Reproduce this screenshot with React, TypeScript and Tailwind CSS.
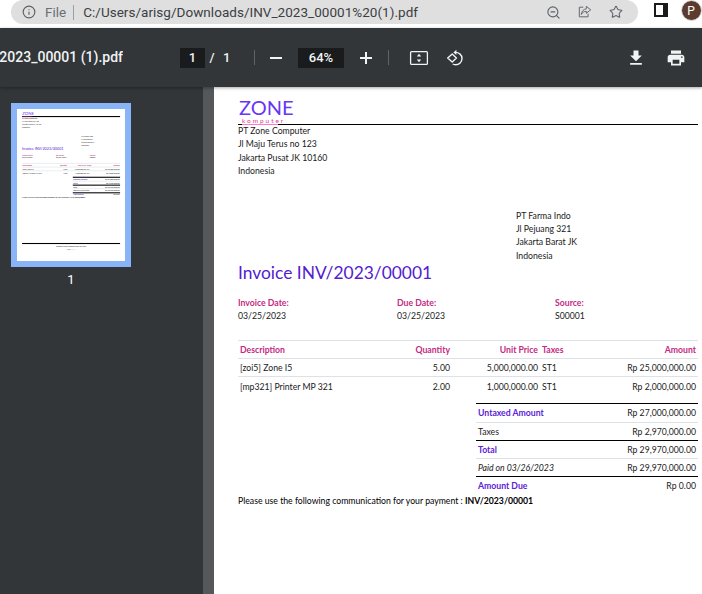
import { Info, Star, ZoomOut } from "lucide-react";

const TABLE_ROWS = [
    { desc: "[zoi5] Zone I5", qty: "5.00", price: "5,000,000.00", tax: "ST1", amount: "Rp 25,000,000.00" },
    { desc: "[mp321] Printer MP 321", qty: "2.00", price: "1,000,000.00", tax: "ST1", amount: "Rp 2,000,000.00" },
];

const TOTALS = [
    { label: "Untaxed Amount", value: "Rp 27,000,000.00", labelCls: "font-bold text-[#5b21d6]", strong: true },
    { label: "Taxes", value: "Rp 2,970,000.00", labelCls: "", strong: false },
    { label: "Total", value: "Rp 29,970,000.00", labelCls: "font-bold text-[#5b21d6]", strong: true },
    { label: "Paid on 03/26/2023", value: "Rp 29,970,000.00", labelCls: "italic", strong: false },
    { label: "Amount Due", value: "Rp 0.00", labelCls: "font-bold text-[#5b21d6]", strong: true },
];

// thumb: hairlines get thicker so they survive the scale-down
function Invoice({ thumb = false }: { thumb?: boolean }) {
    const blackTop = thumb ? "border-t-[5px] border-black" : "border-t border-black";
    const grayTop = thumb ? "border-t-[3px] border-[#dee2e6]" : "border-t border-[#dee2e6]";
    const grayBottom = thumb ? "border-b-[3px] border-[#dee2e6]" : "border-b border-[#dee2e6]";
    return (
        <div className="flex h-[713px] w-[507px] flex-col bg-white pl-6 pr-[23px] pt-[10px] font-['Lato',sans-serif] text-[8.7px] leading-[13.3px] text-[#1a1a1a]">
            {/* Header */}
            <div className={`h-[28px] pl-[1px] ${thumb ? "border-b-[5px] border-black" : "border-b border-black"}`}>
                <div className="text-[20px] leading-[20px] text-[#6a35f5]">ZONE</div>
                <div className="ml-[3px] w-[36px] border-b border-[#ff7ac6] text-[6.5px] leading-[7px] tracking-[1.95px] text-[#e8359c]">
                    komputer
                </div>
            </div>
            <div className="mt-[-1px]">
                <div>PT Zone Computer</div>
                <div>Jl Maju Terus no 123</div>
                <div>Jakarta Pusat JK 10160</div>
                <div>Indonesia</div>
            </div>

            {/* Customer */}
            <div className="ml-[278px] mt-[31.5px]">
                <div>PT Farma Indo</div>
                <div>Jl Pejuang 321</div>
                <div>Jakarta Barat JK</div>
                <div>Indonesia</div>
            </div>

            <h2 className="mt-[-1px] text-[17.4px] leading-[24px] text-[#5420cf]">Invoice INV/2023/00001</h2>

            <div className="mt-[11px] grid grid-cols-[159px_158px_1fr]">
                <div>
                    <div className="font-bold text-[#c42a83]">Invoice Date:</div>
                    <div>03/25/2023</div>
                </div>
                <div>
                    <div className="font-bold text-[#c42a83]">Due Date:</div>
                    <div>03/25/2023</div>
                </div>
                <div>
                    <div className="font-bold text-[#c42a83]">Source:</div>
                    <div>S00001</div>
                </div>
            </div>

            {/* Lines */}
            <div className={`mt-[18px] ${grayTop}`}>
                <div className={`grid h-[18px] grid-cols-[150px_64px_88px_60px_98px] items-center font-bold text-[#c42a83] ${grayBottom}`}>
                    <div className="pl-[2px]">Description</div>
                    <div className="pr-[2px] text-right">Quantity</div>
                    <div className="pr-[2px] text-right">Unit Price</div>
                    <div className="pl-[2px]">Taxes</div>
                    <div className="pr-[2px] text-right">Amount</div>
                </div>
                {TABLE_ROWS.map((r, i) => (
                    <div
                        key={r.desc}
                        className={`grid h-[18px] grid-cols-[150px_64px_88px_60px_98px] items-center ${i === 0 ? grayBottom : ""}`}
                    >
                        <div className="pl-[2px]">{r.desc}</div>
                        <div className="pr-[2px] text-right">{r.qty}</div>
                        <div className="pr-[2px] text-right">{r.price}</div>
                        <div className="pl-[2px]">{r.tax}</div>
                        <div className="pr-[2px] text-right">{r.amount}</div>
                    </div>
                ))}
            </div>

            {/* Totals */}
            <div className="ml-[238px] mt-[8px] w-[222px]">
                {TOTALS.map((t) => (
                    <div key={t.label} className={`flex h-[18.2px] items-center justify-between px-[2px] ${t.strong ? blackTop : grayTop}`}>
                        <span className={t.labelCls}>{t.label}</span>
                        <span>{t.value}</span>
                    </div>
                ))}
            </div>

            <p className="text-black">
                Please use the following communication for your payment : <b>INV/2023/00001</b>
            </p>

            {/* Footer, only seen in the thumbnail */}
            {thumb && (
                <div className="mt-[206px] border-t-[5px] border-black pt-[2px] text-center">
                    <div>Contact: Zone Computer 081234567</div>
                    <div className="mt-[3px] text-[#666]">Page: 1 / 1</div>
                </div>
            )}
        </div>
    );
}

function ShareIcon() {
    return (
        <svg viewBox="0 0 16 16" className="h-[14px] w-[14px]" fill="none" stroke="#5f6368" strokeWidth="1.1">
            <path d="M6 2.5H1.5v11h10V10" />
            <path d="M9.5 1.5l5 4-5 4V7.2C7 7.2 5 8.6 3.8 10.8c.3-3.6 2.5-6 5.7-6.4z" strokeLinejoin="round" />
        </svg>
    );
}

function BrowserBar() {
    return (
        <div className="flex h-[28px] items-start bg-white font-['Roboto',sans-serif]">
            <div className="ml-[11px] flex h-[24px] w-[630px] items-center rounded-[12px] bg-[#dfdfdf] pl-[11px] text-[#3c4043]">
                <Info size={14} color="#5f6368" strokeWidth={2} />
                <span className="ml-[9px] text-[13.5px] text-[#6b6f73]">File</span>
                <span className="ml-[7px] h-[15px] w-px bg-[#9aa0a6]" />
                <span className="ml-[9px] whitespace-nowrap text-[13.5px] tracking-[0.03px]">C:/Users/arisg/Downloads/INV_2023_00001%20(1).pdf</span>
                <div className="ml-auto flex items-center gap-[17px] pr-[15px]">
                    <ZoomOut size={15} color="#5f6368" strokeWidth={1.8} />
                    <ShareIcon />
                    <Star size={14} color="#5f6368" strokeWidth={1.8} />
                </div>
            </div>
            {/* Side panel toggle */}
            <div className="ml-[16px] mt-[3px] flex h-[14px] w-[14px] border-2 border-[#1a1a1a] bg-[#1a1a1a]">
                <div className="h-full w-[7px] bg-white" />
            </div>
            <div className="ml-[13px] flex h-[21px] w-[21px] shrink-0 items-center justify-center rounded-full border border-[#e4e4e4] bg-[#5d3a2e] pr-[1px] text-[12px] text-white">
                P
            </div>
        </div>
    );
}

function PdfToolbar() {
    return (
        <div className="relative z-10 flex h-[59px] items-center bg-[#323639] font-['Roboto',sans-serif] text-[13px] font-medium text-[#f1f3f4] shadow-[0_1px_3px_rgba(0,0,0,0.35)]">
            <div className="flex w-[123px] shrink-0 justify-end overflow-hidden whitespace-nowrap text-[14px]">
                INV_2023_00001 (1).pdf
            </div>
            <div className="ml-[57px] flex h-[20px] w-[25px] items-center justify-center bg-[#191b1c]">1</div>
            <span className="ml-[3px] w-[8px] text-center">/</span>
            <span className="ml-[7px] w-[8px]">1</span>
            <span className="ml-[23px] h-[15px] w-px bg-[#5f6368]" />
            <span className="ml-[15px] h-[2px] w-[12px] bg-[#f1f3f4]" />
            <div className="ml-[16px] flex h-[20px] w-[46px] items-center justify-center bg-[#191b1c]">64%</div>
            <svg viewBox="0 0 14 14" className="ml-[15px] h-[14px] w-[14px]" fill="#f1f3f4">
                <path d="M6 1h2v5h5v2H8v5H6V8H1V6h5z" />
            </svg>
            <span className="ml-[15px] h-[15px] w-px bg-[#5f6368]" />
            {/* Fit to page */}
            <svg viewBox="0 0 20 16" className="ml-[20px] h-[16px] w-[20px]" fill="none">
                <rect x="1.6" y="1.6" width="16.8" height="12.8" rx="1" stroke="#f1f3f4" strokeWidth="1.3" />
                <path d="M10 3.8l2.2 2.6H7.8zM10 12.2L7.8 9.6h4.4z" fill="#f1f3f4" />
            </svg>
            {/* Rotate */}
            <svg viewBox="0 0 18 18" className="ml-[17px] h-[18px] w-[18px]" fill="none" stroke="#f1f3f4" strokeWidth="1.4">
                <path d="M1.7 9L6.2 5l4.2 4-4.2 4z" strokeLinejoin="round" />
                <path d="M9 3.4c3.4-.3 7 2.2 7 6.1 0 3.5-2.9 6.2-6.4 6.2-1.1 0-2-.2-2.9-.7" />
                <path d="M10.4 .8L7.4 3.4l3 2.6z" fill="#f1f3f4" stroke="none" />
            </svg>
            <svg viewBox="0 0 24 24" className="ml-[162px] h-[20px] w-[20px]" fill="#f1f3f4">
                <path d="M19 9h-4V3H9v6H5l7 7 7-7zM5 18v2h14v-2H5z" />
            </svg>
            <svg viewBox="0 0 24 24" className="ml-[20px] h-[20px] w-[20px]" fill="#f1f3f4">
                <path d="M19 8H5c-1.66 0-3 1.34-3 3v6h4v4h12v-4h4v-6c0-1.66-1.34-3-3-3zm-3 11H8v-5h8v5zm3-7c-.55 0-1-.45-1-1s.45-1 1-1 1 .45 1 1-.45 1-1 1zm-1-9H6v4h12V3z" />
            </svg>
        </div>
    );
}

export default function App() {
    return (
        <div className="flex h-[594px] w-[702px] flex-col overflow-hidden bg-[#323639]">
            <BrowserBar />
            <PdfToolbar />
            <div className="flex min-h-0 flex-1">
                {/* Thumbnails */}
                <div className="flex w-[203px] shrink-0 flex-col pl-[11px] pt-[16px]">
                    <div className="h-[164px] w-[120px] overflow-hidden border-[6px] border-[#8ab4f8] bg-white">
                        <div className="origin-top-left scale-[0.213]">
                            <Invoice thumb />
                        </div>
                    </div>
                    <div className="mt-[3px] w-[120px] text-center font-['Roboto',sans-serif] text-[13px] text-white">1</div>
                </div>
                {/* Scrollbar */}
                <div className="w-[11px] shrink-0 bg-[#54585b]" />
                {/* Page */}
                <div className="min-w-0 flex-1 overflow-hidden bg-white">
                    <Invoice />
                </div>
            </div>
        </div>
    );
}
